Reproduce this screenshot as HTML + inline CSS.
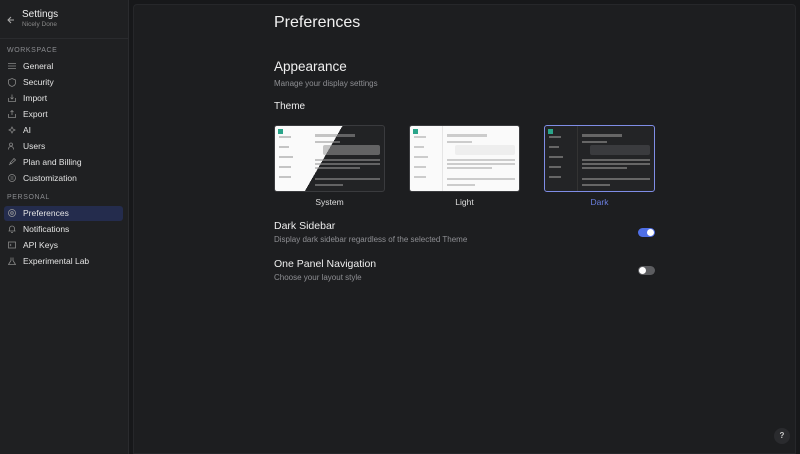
<!DOCTYPE html><html><head><style>
*{box-sizing:border-box;margin:0;padding:0}
body{width:800px;height:454px;background:#17181a;font-family:"Liberation Sans",sans-serif;color:#e6e6e6;position:relative;overflow:hidden}
.sb{position:absolute;left:0;top:0;width:129px;height:454px;background:#1f2022;border-right:1px solid #2a2b2e}
.main{position:absolute;left:133px;top:4px;right:4px;bottom:0;background:#1d1e20;border:1px solid #26272a;border-radius:4px 4px 0 0}
.hdr{position:absolute;left:0;top:0;width:129px;height:39px;border-bottom:1px solid #2a2b2e}
.sec{position:absolute;left:7px;font-size:7px;letter-spacing:.6px;color:#8a8b8f}
.it{position:absolute;left:4px;width:119px;height:15px;font-size:8.5px;line-height:15px;padding-left:19px;color:#e4e4e4;border-radius:3px}
.it svg{position:absolute;left:4px;top:3px}
.act{background:#242c4d}
.t{position:absolute;white-space:nowrap}
.th{position:absolute;top:125px;width:111px;height:67px;border-radius:3px;overflow:hidden;border:1px solid #3a3b3e}
.lbl{position:absolute;top:197px;font-size:8.5px;width:111px;text-align:center;color:#ddd}
.tg{position:absolute;left:638px;width:17px;height:9px;border-radius:5px}
.tg i{position:absolute;top:1px;width:7px;height:7px;border-radius:50%;background:#fff}
</style></head><body>
<div class="sb">
<div class="hdr">
<svg class="t" style="left:7px;top:16px" width="8" height="8" viewBox="0 0 8 8"><path d="M7 4H1M4 1L1 4L4 7" stroke="#aaa" fill="none" stroke-width="1"/></svg>
<div class="t" style="left:22px;top:9px;font-size:10px;color:#eee">Settings</div>
<div class="t" style="left:22px;top:21px;font-size:6.5px;color:#888">Nicely Done</div>
</div>
<div class="sec" style="top:47px">WORKSPACE</div>
<div class="it" style="top:59px"><svg width="8" height="8"><path d="M0 1.5h8M0 4h8M0 6.5h8" stroke="#888" stroke-width=".8"/></svg>General</div>
<div class="it" style="top:75px"><svg width="8" height="9"><path d="M4 .5L7.5 2v3c0 2-2 3-3.5 3.5C2.5 8 .5 7 .5 5V2z" stroke="#888" fill="none" stroke-width=".8"/></svg>Security</div>
<div class="it" style="top:91px"><svg width="8" height="8"><path d="M.5 4v3.5h7V4M4 .5v4.5M2.5 3.5L4 5l1.5-1.5" stroke="#888" fill="none" stroke-width=".8"/></svg>Import</div>
<div class="it" style="top:107px"><svg width="8" height="8"><path d="M.5 4v3.5h7V4M4 5V.5M2.5 2L4 .5 5.5 2" stroke="#888" fill="none" stroke-width=".8"/></svg>Export</div>
<div class="it" style="top:123px"><svg width="8" height="8"><path d="M4 1l1 2 2 1-2 1-1 2-1-2-2-1 2-1z" stroke="#888" fill="none" stroke-width=".8"/></svg>AI</div>
<div class="it" style="top:139px"><svg width="8" height="8"><circle cx="3" cy="2.5" r="1.5" stroke="#888" fill="none" stroke-width=".8"/><path d="M.5 7.5c0-2 1-3 2.5-3s2.5 1 2.5 3" stroke="#888" fill="none" stroke-width=".8"/></svg>Users</div>
<div class="it" style="top:155px"><svg width="8" height="8"><path d="M1 7l2-2M2 5l4-4.5 1.5 1.5L3 6z" stroke="#888" fill="none" stroke-width=".8"/></svg>Plan and Billing</div>
<div class="it" style="top:171px"><svg width="8" height="8"><circle cx="4" cy="4" r="3.5" stroke="#888" fill="none" stroke-width=".8"/><path d="M2.5 3h3M2.5 5h3" stroke="#888" stroke-width=".8"/></svg>Customization</div>
<div class="sec" style="top:194px">PERSONAL</div>
<div class="it act" style="top:206px"><svg width="8" height="8"><circle cx="4" cy="4" r="3.5" stroke="#999" fill="none" stroke-width=".8"/><circle cx="4" cy="4" r="1.3" stroke="#999" fill="none" stroke-width=".8"/></svg>Preferences</div>
<div class="it" style="top:222px"><svg width="8" height="8"><path d="M1.5 6V3.5a2.5 2.5 0 015 0V6h1H.5M3 7.5h2" stroke="#888" fill="none" stroke-width=".8"/></svg>Notifications</div>
<div class="it" style="top:238px"><svg width="8" height="8"><rect x=".5" y="1" width="7" height="6" stroke="#888" fill="none" stroke-width=".8"/><path d="M2 3l1 1-1 1" stroke="#888" fill="none" stroke-width=".7"/></svg>API Keys</div>
<div class="it" style="top:254px"><svg width="8" height="8"><path d="M3 .5v3l-2.5 4h7L5 3.5v-3" stroke="#888" fill="none" stroke-width=".8"/></svg>Experimental Lab</div>
</div>
<div class="main"></div>
<div class="t" style="left:274px;top:14px;font-size:16px;color:#f0f0f0">Preferences</div>
<div class="t" style="left:274px;top:59px;font-size:13.5px;color:#f0f0f0">Appearance</div>
<div class="t" style="left:274px;top:79px;font-size:8px;color:#8e8f93">Manage your display settings</div>
<div class="t" style="left:274px;top:101px;font-size:10px;color:#eee">Theme</div>
<div class="th" style="left:274px;background:linear-gradient(120deg,#fafafa 0,#fafafa 46%,#222325 46%)">
<svg width="111" height="67"><g fill="#999" opacity=".55"><rect x="40" y="8" width="40" height="3"/><rect x="40" y="15" width="25" height="2"/><rect x="48" y="19" width="57" height="10" rx="2"/><rect x="40" y="33" width="65" height="2"/><rect x="40" y="37" width="65" height="2"/><rect x="40" y="41" width="45" height="2"/><rect x="40" y="52" width="65" height="2"/><rect x="40" y="58" width="28" height="2"/><rect x="4" y="10" width="12" height="2"/><rect x="4" y="20" width="10" height="2"/><rect x="4" y="30" width="14" height="2"/><rect x="4" y="40" width="12" height="2"/><rect x="4" y="50" width="12" height="2"/></g><rect x="3" y="3" width="5" height="5" fill="#2aa58a"/></svg></div>
<div class="th" style="left:409px;background:#fafafa">
<svg width="111" height="67"><g fill="#ccc"><rect x="37" y="8" width="40" height="3"/><rect x="37" y="15" width="25" height="2"/><rect x="45" y="19" width="60" height="10" rx="2" fill="#eee"/><rect x="37" y="33" width="68" height="2"/><rect x="37" y="37" width="68" height="2"/><rect x="37" y="41" width="45" height="2"/><rect x="37" y="52" width="68" height="2"/><rect x="37" y="58" width="28" height="2"/><rect x="4" y="10" width="12" height="2"/><rect x="4" y="20" width="10" height="2"/><rect x="4" y="30" width="14" height="2"/><rect x="4" y="40" width="12" height="2"/><rect x="4" y="50" width="12" height="2"/></g><rect x="32" y="0" width="1" height="67" fill="#e5e5e5"/><rect x="3" y="3" width="5" height="5" fill="#2aa58a"/></svg></div>
<div class="th" style="left:544px;background:#232426;border:1.5px solid #7f8de6">
<svg width="111" height="67"><g fill="#666"><rect x="37" y="8" width="40" height="3"/><rect x="37" y="15" width="25" height="2"/><rect x="45" y="19" width="60" height="10" rx="2" fill="#3a3b3e"/><rect x="37" y="33" width="68" height="2"/><rect x="37" y="37" width="68" height="2"/><rect x="37" y="41" width="45" height="2"/><rect x="37" y="52" width="68" height="2"/><rect x="37" y="58" width="28" height="2"/><rect x="4" y="10" width="12" height="2"/><rect x="4" y="20" width="10" height="2"/><rect x="4" y="30" width="14" height="2"/><rect x="4" y="40" width="12" height="2"/><rect x="4" y="50" width="12" height="2"/></g><rect x="32" y="0" width="1" height="67" fill="#333"/><rect x="3" y="3" width="5" height="5" fill="#2aa58a"/></svg></div>
<div class="lbl" style="left:274px">System</div>
<div class="lbl" style="left:409px">Light</div>
<div class="lbl" style="left:544px;color:#6b7fe0">Dark</div>
<div class="t" style="left:274px;top:220px;font-size:10.5px;color:#eee">Dark Sidebar</div>
<div class="t" style="left:274px;top:235px;font-size:8px;color:#8e8f93">Display dark sidebar regardless of the selected Theme</div>
<div class="tg" style="top:228px;background:#4f6fe6"><i style="left:9px"></i></div>
<div class="t" style="left:274px;top:258px;font-size:10.5px;color:#eee">One Panel Navigation</div>
<div class="t" style="left:274px;top:273px;font-size:8px;color:#8e8f93">Choose your layout style</div>
<div class="tg" style="top:266px;background:#5c5d60"><i style="left:1px"></i></div>
<div class="t" style="left:774px;top:428px;width:16px;height:16px;border-radius:50%;background:#2a2b2e;font-size:8px;text-align:center;line-height:16px;color:#ccc;font-weight:bold">?</div>
</body></html>
